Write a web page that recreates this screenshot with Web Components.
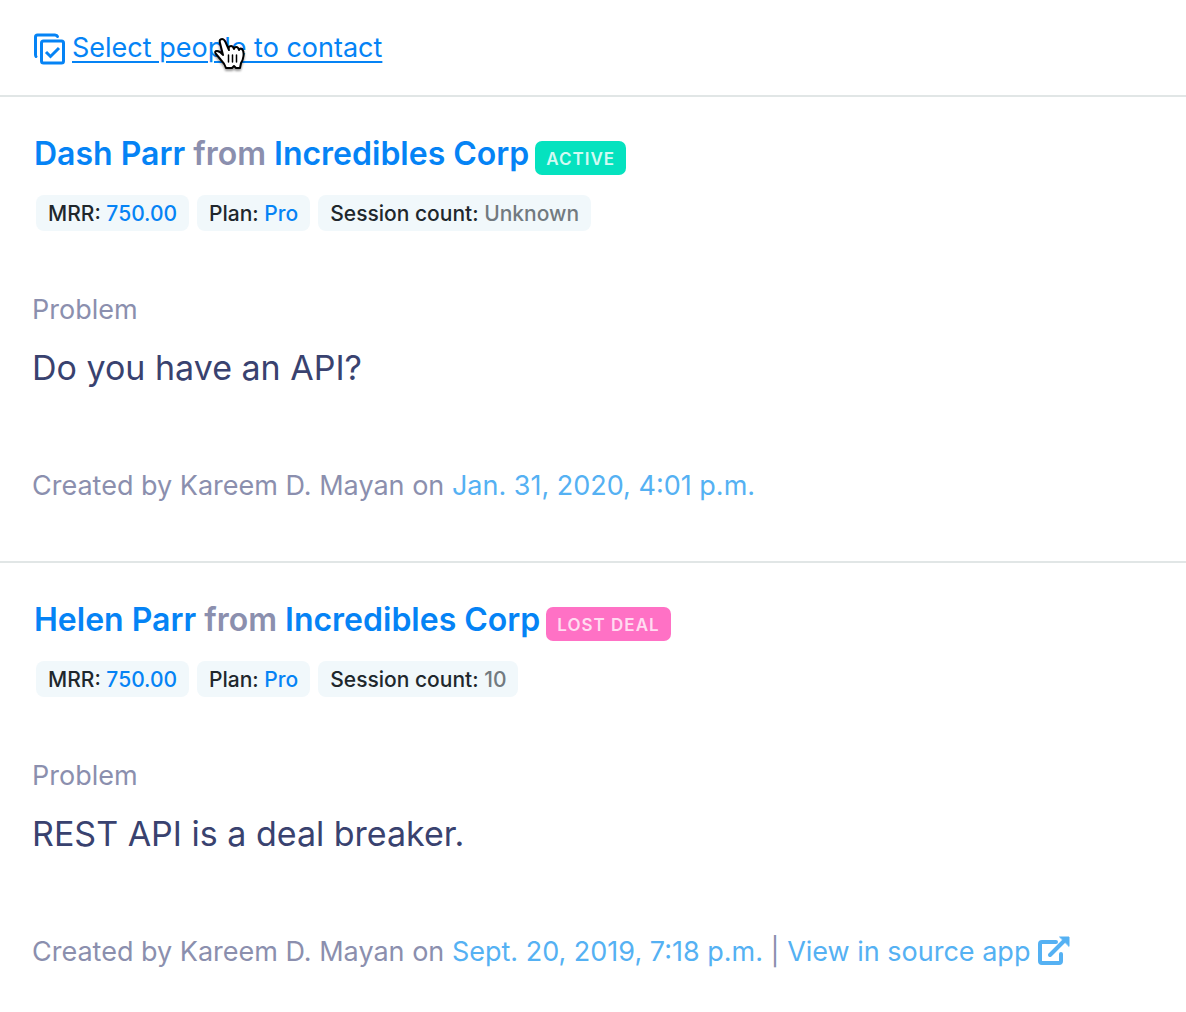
<!DOCTYPE html>
<html lang="en">
<head>
<meta charset="utf-8">
<title>Feedback</title>
<style>
body { margin: 0; background: #fff; font-family: Inter, "Liberation Sans", sans-serif; color: #8b8fae; --blue: #0583f5; --sky: #55b1f3; --ink: #39426f; --rule: #e1e6e6; }
</style>
</head>
<body>
<contact-bar>Select people to contact</contact-bar>
<main>
  <feedback-entry label="Problem">
    <person-title slot="title" person="Dash Parr" company="Incredibles Corp"><status-badge tone="active">ACTIVE</status-badge></person-title>
    <data-chip slot="chips" label="MRR:" linked>750.00</data-chip>
    <data-chip slot="chips" label="Plan:" linked>Pro</data-chip>
    <data-chip slot="chips" label="Session count:">Unknown</data-chip>
    Do you have an API?
    <entry-meta slot="meta" author="Kareem D. Mayan" date="Jan. 31, 2020, 4:01 p.m."></entry-meta>
  </feedback-entry>
  <feedback-entry label="Problem">
    <person-title slot="title" person="Helen Parr" company="Incredibles Corp"><status-badge tone="lost">LOST DEAL</status-badge></person-title>
    <data-chip slot="chips" label="MRR:" linked>750.00</data-chip>
    <data-chip slot="chips" label="Plan:" linked>Pro</data-chip>
    <data-chip slot="chips" label="Session count:">10</data-chip>
    REST API is a deal breaker.
    <entry-meta slot="meta" author="Kareem D. Mayan" date="Sept. 20, 2019, 7:18 p.m." source></entry-meta>
  </feedback-entry>
</main>
<hand-pointer></hand-pointer>
<script>
const define = (name, render) => customElements.define(name, class extends HTMLElement {
  connectedCallback() {
    if (this.shadowRoot) return;
    this.attachShadow({ mode: "open" }).innerHTML = render(this);
  }
});

define("contact-bar", () => `
<style>
:host { display: block; padding: 28px 32px 27px; }
a { display: flex; align-items: center; gap: 6px; width: max-content; font-size: 27px; line-height: 40px; color: var(--blue); text-decoration: none; }
span { text-decoration: underline; text-decoration-thickness: 2px; text-underline-offset: 4px; }
svg { width: 34px; height: 34px; }
</style>
<a href="#contact">
  <svg viewBox="0 0 34 34" fill="none" stroke="currentColor" stroke-width="3" stroke-linejoin="round" stroke-linecap="round" aria-hidden="true">
    <path d="M4 25.500Q3.500 25 3.500 23.500V6Q3.500 4 5.500 4H23Q25 4 25.500 5.500"/>
    <rect x="9.500" y="10" width="22" height="22" rx="2"/>
    <path d="M14 21L18.500 25.500L27 17" stroke-linecap="butt" stroke-linejoin="miter"/>
  </svg><span><slot></slot></span></a>`);

define("feedback-entry", el => `
<style>
:host { display: block; border-top: 2px solid var(--rule); padding: 35px 32px 57px; }
header { display: flex; flex-direction: column; gap: 19px; padding-left: 2px; }
.chips { display: flex; flex-wrap: wrap; gap: 8px; padding-left: 2px; }
h3 { margin: 61px 0 0; font-size: 27px; font-weight: 400; line-height: 36px; }
p { margin: 16px 0 76px; font-size: 34px; line-height: 48px; color: var(--ink); }
</style>
<article>
  <header><slot name="title"></slot><div class="chips"><slot name="chips"></slot></div></header>
  <h3>${el.getAttribute("label")}</h3>
  <p><slot></slot></p>
  <slot name="meta"></slot>
</article>`);

define("person-title", el => `
<style>
:host { display: block; }
h2 { display: flex; flex-wrap: wrap; gap: 6px; margin: 0; font-size: 32px; font-weight: 600; line-height: 44px; }
a { color: var(--blue); text-decoration: none; }
</style>
<h2><span><a href="#person">${el.getAttribute("person")}</a> from <a href="#company">${el.getAttribute("company")}</a></span><slot></slot></h2>`);

define("status-badge", () => `
<style>
:host { display: block; align-self: flex-end; box-sizing: border-box; height: 34px; margin-bottom: 1px; padding: 0 11px; border-radius: 7px; font-size: 17px; font-weight: 600; line-height: 36px; letter-spacing: 1px; color: #d3faf3; background: #05e2bf; }
:host([tone="lost"]) { background: #ff71c5; color: #ffdcf1; }
</style><slot></slot>`);

define("data-chip", el => `
<style>
:host { display: block; padding: 2px 12px 0; border-radius: 8px; background: #f1f8fb; font-size: 21px; font-weight: 500; line-height: 34px; color: #727a80; }
:host([linked]) { color: var(--blue); }
b { font-weight: 500; color: #20272c; }
</style><b>${el.getAttribute("label")}</b> <slot></slot>`);

define("entry-meta", el => `
<style>
:host { display: block; font-size: 27px; line-height: 36px; }
a { color: var(--sky); text-decoration: none; }
svg { width: 32px; height: 30px; margin-left: 8px; vertical-align: -5px; }
</style>Created by ${el.getAttribute("author")} on <a href="#entry">${el.getAttribute("date")}</a>${el.hasAttribute("source") ? ` | <a href="#source">View in source app<svg viewBox="0 0 32 30" fill="none" stroke="currentColor" stroke-width="4" stroke-linecap="round" stroke-linejoin="round" aria-hidden="true">
<path d="M18 6H4Q2 6 2 8V25Q2 27 4 27H21Q23 27 23 25V18"/><path d="M12 19L26 5"/><path d="M22 1H31V10Z" fill="currentColor" stroke-width="1"/></svg></a>` : ""}`);

define("hand-pointer", () => `
<style>
:host { position: absolute; left: 213px; top: 36px; width: 34px; height: 38px; pointer-events: none; filter: drop-shadow(0 2px 1px #0006); }
svg { display: block; }
</style>
<svg width="34" height="38" viewBox="0 0 34 38" fill="#fff" stroke="#000" stroke-width="2" stroke-linejoin="round" stroke-linecap="round" aria-hidden="true">
<path d="M10 19L7 7Q6 3 9 3Q11 3 12.500 6L16 14Q15 10 18 10Q20 10 21 13Q21 11 23.500 11Q25 11 26 14Q27 12 29 13Q31 15 30.500 20Q30 24 28 27L27 32H23L21 30L19 32H13Q12 28 8 24L3 18Q1 15 4 15Q7 15 10 19Z"/>
<path d="M15.500 19V26M19.500 19V26M23.500 19V26" stroke-width="1.500"/>
</svg>`);
</script>
</body>
</html>
